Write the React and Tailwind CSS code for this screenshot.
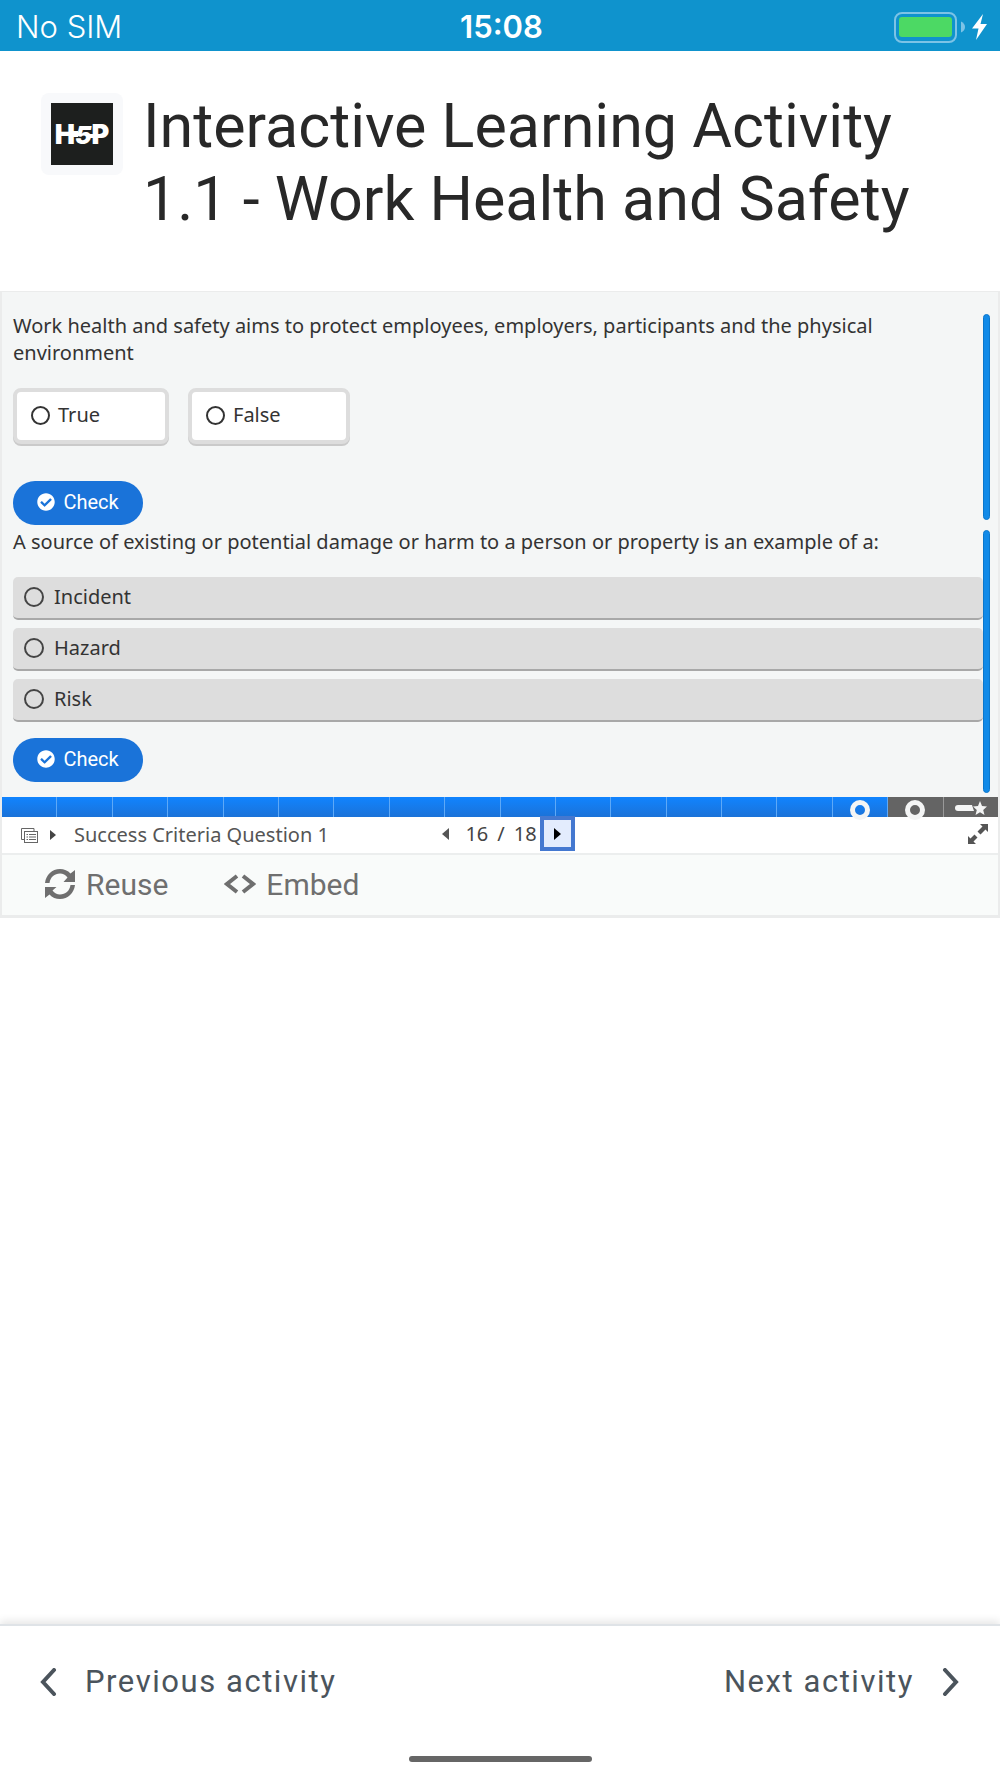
import { useState } from 'react'
import { FaCheckCircle } from 'react-icons/fa'

const TRUE_FALSE = [
  { label: 'True', width: 'w-[156px]' },
  { label: 'False', width: 'w-[162px]' },
]
const OPTIONS = ['Incident', 'Hazard', 'Risk']
const SLIDE_COUNT = 18
const CURRENT_SLIDE = 16

function StatusBar() {
  return (
    <div className="h-[51px] shrink-0 bg-[#0f93cd] pt-[3px] pr-[13px] pl-4 grid grid-cols-[1fr_auto_1fr] items-center text-white font-['Inter',sans-serif]">
      <span className="text-[31px] leading-[48px] font-light">No SIM</span>
      <span className="text-[31px] leading-[48px] font-semibold">15:08</span>
      <svg className="justify-self-end" width="94" height="32" viewBox="0 0 94 32" aria-label="Battery charging">
        <rect x="2" y="2" width="61" height="29" rx="7" fill="none" stroke="#7cc3e6" strokeWidth="2" />
        <rect x="6" y="6" width="53" height="20" rx="3" fill="#4cd964" />
        <path d="M68 10.500q4 2 4 5.500t-4 5.500z" fill="#7cc3e6" />
        <path d="M90 3L79 17.500h6.500L83 29L94 13h-6.500z" fill="#fff" />
      </svg>
    </div>
  )
}

function H5PLogo() {
  return (
    <div className="size-[82px] shrink-0 rounded-lg bg-[#f8f9fb] p-[10px]">
      <svg className="size-full" viewBox="0 0 62 62" fontFamily="Inter, sans-serif" fontWeight="900" fill="#fff" aria-label="H5P">
        <rect width="62" height="62" fill="#1d1f1e" />
        {/* bars that join the letters */}
        <path d="M18 28h9v6h-9zM37 31h6v4h-6z" />
        <text x="31" y="41" fontSize="27" textAnchor="middle">
          H<tspan fontSize="25" fontStyle="italic">5</tspan>P
        </text>
      </svg>
    </div>
  )
}

function CheckButton() {
  return (
    <button className="flex h-11 w-[130px] items-center justify-center gap-2 rounded-full bg-[#1a73d9] pb-[2px] font-['Roboto',sans-serif] text-[20px] text-white">
      <FaCheckCircle size={18} />
      Check
    </button>
  )
}

function ScrollBar({ className }) {
  return <div className={`w-[7px] shrink-0 rounded-full border border-[#0b77cc] bg-[#118ae8] ${className}`} />
}

function TrueFalseQuestion() {
  const [answer, setAnswer] = useState(null)

  return (
    <section className="flex">
      <div className="flex-1">
        <p className="pr-20 text-[20px] leading-[27px]">
          Work health and safety aims to protect employees, employers, participants and the physical environment
        </p>
        <div className="mt-[22px] flex gap-[19px]">
          {TRUE_FALSE.map(({ label, width }) => (
            <label
              key={label}
              className={`flex h-14 items-center gap-2 rounded-lg border-4 border-[#ddd] bg-white pb-[2px] pl-[14px] text-[20px] shadow-[0_2px_0_#cacaca] ${width}`}
            >
              <input
                type="radio"
                name="truefalse"
                checked={answer === label}
                onChange={() => setAnswer(label)}
                className="size-[19px] appearance-none rounded-full border-2 border-[#333] checked:bg-[#1a73d9]"
              />
              {label}
            </label>
          ))}
        </div>
        <div className="mt-[37px]">
          <CheckButton />
        </div>
      </div>
      <ScrollBar className="mt-[2px] mb-[5px]" />
    </section>
  )
}

function ChoiceQuestion() {
  const [choice, setChoice] = useState(null)

  return (
    <section className="mt-[3px] flex">
      <div className="flex-1 pb-[11px]">
        <p className="text-[20px] leading-[27px]">
          A source of existing or potential damage or harm to a person or property is an example of a:
        </p>
        <div className="mt-[22px] flex flex-col gap-2">
          {OPTIONS.map((label) => (
            <label
              key={label}
              className="flex h-[43px] items-center gap-[10px] rounded-[5px] border-b-2 border-[#a8a8a8] bg-[#ddd] pb-[2px] pl-[11px] text-[20px]"
            >
              <input
                type="radio"
                name="choice"
                checked={choice === label}
                onChange={() => setChoice(label)}
                className="size-5 appearance-none rounded-full border-2 border-[#444] checked:bg-[#1a73d9]"
              />
              {label}
            </label>
          ))}
        </div>
        <div className="mt-4">
          <CheckButton />
        </div>
      </div>
      <ScrollBar className="mt-[2px]" />
    </section>
  )
}

function ProgressBar() {
  return (
    <div className="flex h-5">
      {Array.from({ length: SLIDE_COUNT }, (_, i) => i + 1).map((n) => (
        <div
          key={n}
          className={`flex flex-1 justify-center border-r last:border-r-0 ${
            n <= CURRENT_SLIDE
              ? 'border-[#5ea9f7] bg-linear-to-b from-[#1084ff] to-[#1a72d8]'
              : 'border-[#999] bg-[#646464]'
          }`}
        >
          {(n === 16 || n === 17) && (
            <span className="mt-[3px] size-5 shrink-0 rounded-full border-[5px] border-[#f4f5f5]" />
          )}
          {n === SLIDE_COUNT && (
            <svg className="mt-1" width="32" height="15" viewBox="0 0 32 15" fill="#f4f5f5" aria-hidden>
              <path d="M3 4h14l2 6H3a3 3 0 0 1 0-6z" />
              <path d="M25 0l2 5 5 .5-3.800 3.500 1.300 5-4.500-2.800-4.500 2.800 1.300-5L18 5.500l5-.5z" />
            </svg>
          )}
        </div>
      ))}
    </div>
  )
}

function SlideNav() {
  return (
    <nav className="grid h-9 grid-cols-[1fr_auto_1fr] items-center pl-[19px] pr-[10px] text-[20px]">
      <button className="flex items-center text-[#555]">
        <svg width="17" height="15" viewBox="0 0 17 15" fill="none" stroke="#666" aria-hidden>
          <path d="M3 11.500H.500V.500h12.500v2.500" />
          <rect x="3.500" y="3.500" width="13" height="11" fill="#fff" />
          <path d="M5.500 6.500h1.500M8 6.500h7M5.500 9h1.500M8 9h7M5.500 11.500h1.500M8 11.500h7" />
        </svg>
        <svg className="ml-3" width="6" height="10" viewBox="0 0 6 10" fill="#444" aria-hidden>
          <path d="M0 0l6 5-6 5z" />
        </svg>
        <span className="ml-[18px]">Success Criteria Question 1</span>
      </button>
      <div className="-mt-px flex items-center self-start text-[#444]">
        <button aria-label="Previous slide" className="px-2">
          <svg width="7" height="12" viewBox="0 0 7 12" fill="#555" aria-hidden>
            <path d="M7 0v12L0 6z" />
          </svg>
        </button>
        <div className="ml-2 flex gap-[9px]">
          <span>16</span>
          <span>/</span>
          <span>18</span>
        </div>
        <button
          aria-label="Next slide"
          className="ml-[3px] flex size-[35px] items-center justify-center border-4 border-[#4478d0] bg-[#e3ecfd]"
        >
          <svg width="7" height="12" viewBox="0 0 7 12" fill="#000" aria-hidden>
            <path d="M0 0l7 6-7 6z" />
          </svg>
        </button>
      </div>
      <button aria-label="Fullscreen" className="justify-self-end pb-[3px]">
        <svg width="20" height="20" viewBox="0 0 20 20" fill="#555" aria-hidden>
          <path d="M12 0h8v8l-2.500-2.500-5 5-3-3 5-5z" />
          <path d="M8 20H0v-8l2.500 2.500 4-4 3 3-4 4z" />
        </svg>
      </button>
    </nav>
  )
}

function ContentActions() {
  return (
    <div className="flex h-[62px] items-center gap-14 border-t-2 border-[#eceeee] bg-[#f9fbfa] pb-[2px] pl-[43px] font-['Roboto',sans-serif] text-[30px] text-[#6f6f6f]">
      <button className="flex items-center gap-[11px]">
        <svg width="30" height="30" viewBox="0 0 30 30" fill="#6f6f6f" aria-hidden>
          <path d="M0 14C1 6 7 0 15 0c4 0 8 1.500 10.500 4.500L30 1v12H18.500l4-4.500C20.500 6 18 4.500 15 4.500 9.500 4.500 5.500 8 4.500 14z" />
          <path d="M30 16c-1 8-7 14-15 14-4 0-8-1.500-10.500-4.500L0 29V18h11.500l-4 3.500c2 2.500 4.500 4 7.500 4 5.500 0 9.500-3.500 10.500-9.500z" />
        </svg>
        Reuse
      </button>
      <button className="flex items-center gap-[10px]">
        <svg width="32" height="20" viewBox="0 0 32 20" fill="none" stroke="#6f6f6f" strokeWidth="4" aria-hidden>
          <path d="M13 2L3 10l10 8M19 2l10 8-10 8" />
        </svg>
        Embed
      </button>
    </div>
  )
}

function ActivityFooter() {
  return (
    <footer className="border-t-2 border-[#dfe3e7] bg-white pb-4 text-[#4b545c] shadow-[0_-3px_8px_rgba(0,0,0,0.1)]">
      <div className="flex h-[112px] items-center justify-between pr-[41px] pl-10 font-['Roboto',sans-serif] text-[31px] tracking-wider">
        <button className="flex items-center gap-7">
          <svg width="17" height="28" viewBox="0 0 17 28" fill="none" stroke="currentColor" strokeWidth="4" strokeLinecap="round" aria-hidden>
            <path d="M14 2L3 14l11 12" />
          </svg>
          Previous activity
        </button>
        <button className="flex items-center gap-7">
          Next activity
          <svg width="17" height="28" viewBox="0 0 17 28" fill="none" stroke="currentColor" strokeWidth="4" strokeLinecap="round" aria-hidden>
            <path d="M3 2l11 12L3 26" />
          </svg>
        </button>
      </div>
      <div className="mx-auto mt-[18px] h-[6px] w-[183px] rounded-full bg-[#666]" />
    </footer>
  )
}

export default function App() {
  return (
    <div className="flex min-h-screen flex-col bg-white">
      <StatusBar />
      <header className="flex gap-5 px-[41px] pt-[39px] pb-[55px]">
        <div className="mt-[3px]">
          <H5PLogo />
        </div>
        <h1 className="pr-10 font-['Roboto',sans-serif] text-[61px] leading-[73px] text-[#282828]">
          Interactive Learning Activity 1.1 - Work Health and Safety
        </h1>
      </header>
      <main className="border-x-2 border-t border-b-[3px] border-[#ebecec] bg-white font-['Noto_Sans',sans-serif] text-[#333]">
        <div className="bg-[#f4f6f6] pt-5 pr-2 pb-1 pl-[11px]">
          <TrueFalseQuestion />
          <ChoiceQuestion />
        </div>
        <ProgressBar />
        <SlideNav />
        <ContentActions />
      </main>
      <div className="flex-1" />
      <ActivityFooter />
    </div>
  )
}
